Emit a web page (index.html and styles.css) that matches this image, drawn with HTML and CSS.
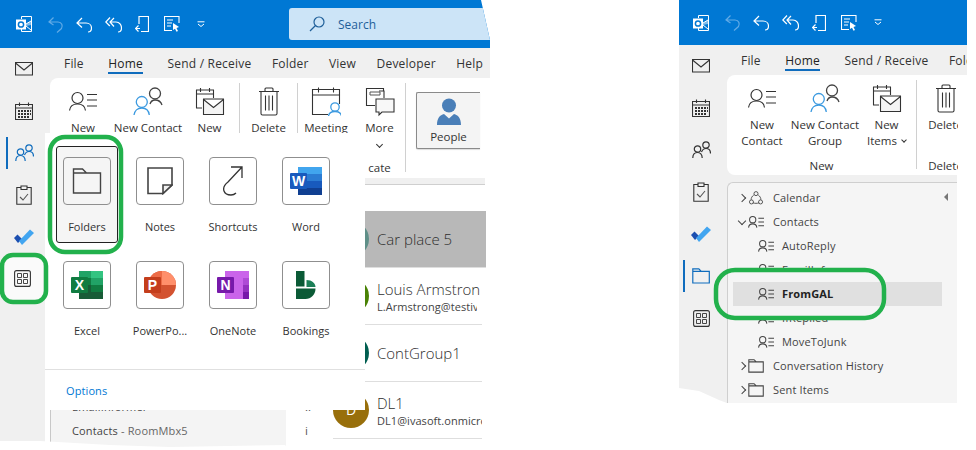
FILE: index.html
```html
<!DOCTYPE html>
<html lang="en">
<head>
<meta charset="utf-8">
<title>Outlook</title>
<link rel="stylesheet" href="styles.css">
</head>
<body>
<svg class="defs" aria-hidden="true">
  <symbol id="i-ol" viewBox="0 0 16 16"><path d="M5.5 3V.5h10v15h-10V13" fill="none" stroke="#fff"/><path d="M0 3.5h10v10H0z" fill="#fff"/><circle cx="5" cy="8.5" r="2.6" fill="none" stroke="#0078d4" stroke-width="1.5"/><path d="M10 8l5-3M10 10l5 4" fill="none" stroke="#fff"/><path d="M10 8l5-3v4l-5 1z" fill="#fff" opacity=".5"/></symbol>
  <symbol id="i-undo" viewBox="0 0 16 17"><path d="M5.5 1.5L1 6l4.5 3M1 6h9c4 0 5 4 3.5 6.5L9 16.5" fill="none" stroke="currentColor" stroke-width="1.2"/></symbol>
  <symbol id="i-reply" viewBox="0 0 16 17"><path d="M6 2L1 7l5 4.5M1 7h9c3.500 0 5.500 2.500 5.500 5 0 2.500-1.500 4-3.500 4" fill="none" stroke="currentColor" stroke-width="1.200"/></symbol>
  <symbol id="i-replyall" viewBox="0 0 17 17"><path d="M5 1.500L.8 6l4 4M9 2L5 6l4 4.500M5 6h6c3.500 0 5.500 3 5.500 6 0 2.500-1.500 4-3.500 4" fill="none" stroke="currentColor" stroke-width="1.200"/></symbol>
  <symbol id="i-move" viewBox="0 0 14 16"><path d="M4 8V.5h9.500v15H6M5 12.500H.8M3.500 9.500l-3 3 3 3" fill="none" stroke="currentColor" stroke-width="1.200"/></symbol>
  <symbol id="i-rules" viewBox="0 0 16 16"><path d="M15 7V.5H.5v14H8M3 4h6M3 7h5M3 10h4" fill="none" stroke="currentColor" stroke-width="1.100"/><path d="M9 7l6 4-2.500 1 1.500 3-1.500.8-1.500-3L9 14z" fill="currentColor"/></symbol>
  <symbol id="i-qat" viewBox="0 0 8 7"><path d="M.5 .8h7M1 3l3 2.500L7 3" fill="none" stroke="currentColor"/></symbol>
  <symbol id="i-search" viewBox="0 0 16 16"><circle cx="10" cy="6" r="5" fill="none" stroke="#1f5f99" stroke-width="1.200"/><path d="M6.500 9.500L1 15" stroke="#1f5f99" stroke-width="1.200"/></symbol>
  <symbol id="i-mail" viewBox="0 0 18 14"><path d="M.5 .5h17v12.500H.5zM.5 1L9 8l8.500-7" fill="none" stroke="currentColor" stroke-width="1.100"/></symbol>
  <symbol id="i-cal" viewBox="0 0 18 18"><path d="M.5 2.500h17v15H.5zM.5 6h17M4.500 .5v3.500M13.500 .5v3.500" fill="none" stroke="currentColor" stroke-width="1.100"/><path d="M3 8h2v2H3zM6 8h2v2H6zM9 8h2v2H9zM12 8h2v2h-2zM15 8h1v2h-1zM3 11h2v2H3zM6 11h2v2H6zM9 11h2v2H9zM12 11h2v2h-2zM15 11h1v2h-1zM3 14h2v2H3zM6 14h2v2H6zM9 14h2v2H9zM12 14h2v2h-2z" fill="currentColor"/></symbol>
  <symbol id="i-people" viewBox="0 0 19 18"><circle cx="5.500" cy="8" r="3.200" fill="none" stroke="currentColor" stroke-width="1.200"/><path d="M.8 17c0-3.500 2-5.500 4.700-5.500s4.700 2 4.700 5.500" fill="none" stroke="currentColor" stroke-width="1.200"/><circle cx="14" cy="4" r="3.200" fill="none" stroke="currentColor" stroke-width="1.200"/><path d="M9.500 11c.8-2 2.500-3.500 4.500-3.500 2.700 0 4.500 2 4.500 5" fill="none" stroke="currentColor" stroke-width="1.200"/></symbol>
  <symbol id="i-task" viewBox="0 0 16 20"><path d="M5 2.500H.8v16.700h14.400V2.500H11M5 4.500V1h6v3.500z" fill="none" stroke="currentColor" stroke-width="1.100"/><path d="M4 12l3 3 5-6" fill="none" stroke="#555" stroke-width="1.100"/></symbol>
  <symbol id="i-todo" viewBox="0 0 20 16"><path d="M0 9l3.500-3.500L8 10l-4 4z" fill="#1c4fb0"/><path d="M5 12L16 .5 20 4 8 16z" fill="#42a5f0"/></symbol>
  <symbol id="i-apps" viewBox="0 0 17 17"><rect x=".6" y=".6" width="15.800" height="15.800" rx="2" fill="none" stroke="currentColor" stroke-width="1.100"/><path d="M3.500 3.500h4v4h-4zM9.500 3.500h4v4h-4zM3.500 9.500h4v4h-4zM9.500 9.500h4v4h-4z" fill="none" stroke="currentColor" stroke-width=".9"/></symbol>
  <symbol id="i-folder" viewBox="0 0 18 16"><path d="M.8 15V.8h6l2.500 2.500h8V15zM.8 3.300h8.500" fill="none" stroke="currentColor" stroke-width="1.200"/></symbol>
  <symbol id="i-newcontact" viewBox="0 0 30 30"><circle cx="9.500" cy="11" r="5.500" fill="none" stroke="#333" stroke-width="1.200"/><path d="M1.500 23.500c.5-4 3.500-6.500 8-6.500s7.500 2.500 8 6.500" fill="none" stroke="#333" stroke-width="1.200"/><path d="M19 7.500h10M19 13h10M19 19h10" stroke="#333" stroke-width="1.200"/></symbol>
  <symbol id="i-newgroup" viewBox="0 0 30 30"><circle cx="22" cy="6.500" r="5.500" fill="none" stroke="#444" stroke-width="1.300"/><path d="M17 17c1-3 3-4 5-4 3.500 0 6 2 7 5" fill="none" stroke="#444" stroke-width="1.300"/><circle cx="8.800" cy="15" r="5.500" fill="none" stroke="#3c9ae0" stroke-width="1.300"/><path d="M1 28c.5-4 3.500-7 7.800-7s7 3 7.500 7" fill="none" stroke="#3c9ae0" stroke-width="1.300"/></symbol>
  <symbol id="i-newitems" viewBox="0 0 30 30"><path d="M7 21H1.500V3h17v8M1.500 7h17M5.500 1v4M14.500 1v4" fill="none" stroke="#333" stroke-width="1.100"/><path d="M8.500 12h20v15.500h-20zM8.500 12.500l10 8 10-8" fill="#f4f4f4" stroke="#333" stroke-width="1.100"/></symbol>
  <symbol id="i-trash" viewBox="0 0 30 30"><path d="M5 4.500h20M7 4.500v22c0 1 .8 1.500 1.500 1.500h13c.8 0 1.500-.5 1.500-1.500v-22M11 4V2c0-.8.5-1 1-1h6c.5 0 1 .2 1 1v2M11.500 8.500v15M15 8.500v15M18.500 8.500v15" fill="none" stroke="#333" stroke-width="1.100"/></symbol>
  <symbol id="i-meeting" viewBox="0 0 30 30"><path d="M17 27.500H1.500V2.500h27V17M1.500 8h27M7.500 .5v5M22.500 .5v5" fill="none" stroke="#333" stroke-width="1.100"/><circle cx="24" cy="20" r="4.200" fill="none" stroke="#3c9ae0" stroke-width="1.300"/><path d="M17.500 29c.5-3 3-4.500 6.500-4.500s6 1.500 6.500 4.500" fill="none" stroke="#3c9ae0" stroke-width="1.300"/></symbol>
  <symbol id="i-more" viewBox="0 0 30 30"><path d="M10 18.500H1.500V1.500h17v2M14 4h5v7" fill="none" stroke="#333" stroke-width="1.100"/><path d="M5 5h10v3H5z" fill="none" stroke="#555"/><path d="M11 12h18v13H17l-3 3v-3h-3z" fill="#f8f8f8" stroke="#333" stroke-width="1.100"/></symbol>
  <symbol id="i-person" viewBox="0 0 24 28"><circle cx="12" cy="7.500" r="7" fill="#4a7fb8"/><path d="M0 27c0-7 3-10 7-11l5 4.500 5-4.500c4 1 7 4 7 11z" fill="#4a7fb8"/></symbol>
  <symbol id="i-contacts" viewBox="0 0 17 14"><circle cx="5" cy="4.500" r="3.300" fill="none" stroke="#444" stroke-width="1.100"/><path d="M.6 13c.3-2.500 2-4 4.400-4s4.100 1.500 4.400 4" fill="none" stroke="#444" stroke-width="1.100"/><path d="M11 3h6M11 7h6M11 11h6" stroke="#444" stroke-width="1.100"/></symbol>
  <symbol id="i-share" viewBox="0 0 16 16"><path d="M5.500 4.500C3.500 6 2.300 8 2.500 10M13.500 10c.2-2-1-4-3-5.500M4.500 13.500c2 .8 5 .8 7 0" fill="none" stroke="#444"/><circle cx="8" cy="3" r="2.300" fill="none" stroke="#444"/><circle cx="2.800" cy="12.500" r="2.300" fill="none" stroke="#444"/><circle cx="13.200" cy="12.500" r="2.300" fill="none" stroke="#444"/></symbol>
  <symbol id="i-fold" viewBox="0 0 30 30"><path d="M1.500 27V3h9l4 4h14v20zM1.500 7h13" fill="none" stroke="#444" stroke-width="1.400"/></symbol>
  <symbol id="i-note" viewBox="0 0 26 28"><path d="M16 26.500H1V1h24v17z" fill="none" stroke="#444" stroke-width="1.600"/><path d="M16 26.500V18h9z" fill="#f0f0f0" stroke="#444" stroke-width="1.600"/></symbol>
  <symbol id="i-short" viewBox="0 0 20 30"><path d="M8 1h11v11M19 1L5 16C1 19 0 22 1 25c1 3 4 4 7 4 2 0 4-1 5-2" fill="none" stroke="#333" stroke-width="1.300"/></symbol>
  <symbol id="i-word" viewBox="0 0 32 28"><path d="M8 0h24v7H8z" fill="#41a5ee"/><path d="M8 7h24v7H8z" fill="#2b7cd3"/><path d="M8 14h24v7H8z" fill="#185abd"/><path d="M8 21h24v7H8z" fill="#103f91"/><rect y="6" width="17" height="16" rx="1" fill="#185abd"/><text x="8.500" y="18.500" class="app-letter">W</text></symbol>
  <symbol id="i-excel" viewBox="0 0 32 28"><path d="M8 0h12v7H8z" fill="#21a366"/><path d="M20 0h12v7H20z" fill="#33c481"/><path d="M8 7h12v7H8z" fill="#107c41"/><path d="M20 7h12v7H20z" fill="#21a366"/><path d="M8 14h12v7H8z" fill="#185c37"/><path d="M20 14h12v7H20z" fill="#107c41"/><path d="M8 21h24v7H8z" fill="#185c37"/><rect y="6" width="17" height="16" rx="1" fill="#107c41"/><text x="8.500" y="18.500" class="app-letter">X</text></symbol>
  <symbol id="i-ppt" viewBox="0 0 32 28"><circle cx="18" cy="14" r="14" fill="#d35230"/><path d="M18 0a14 14 0 0 1 14 14H18z" fill="#ff8f6b"/><path d="M4 14A14 14 0 0 1 18 0v14z" fill="#ed6c47"/><rect y="6" width="17" height="16" rx="1" fill="#c43e1c"/><text x="8.500" y="18.500" class="app-letter">P</text></symbol>
  <symbol id="i-one" viewBox="0 0 32 28"><path d="M8 0h18v28H8z" fill="#ca64ea"/><path d="M26 0h6v7h-6z" fill="#ca64ea"/><path d="M26 7h6v7h-6z" fill="#ae4bd5"/><path d="M26 14h6v7h-6z" fill="#9332bf"/><path d="M26 21h6v7h-6z" fill="#7719aa"/><rect y="6" width="17" height="16" rx="1" fill="#7719aa"/><text x="8.500" y="18.500" class="app-letter">N</text></symbol>
  <symbol id="i-book" viewBox="0 0 20 28"><path d="M0 0h8.500v15.500H0z" fill="#0b5a36"/><path d="M10.500 9c5.500 0 9 3.500 9 7H10.500z" fill="#1b7f57"/><path d="M0 17.500h19.500c0 6-4.500 10.500-10 10.500H0z" fill="#0b5a36"/></symbol>
</svg>

<main class="canvas">
  <section class="win win-left">
    <header class="titlebar">
      <svg class="qi qi-ol"><use href="#i-ol"/></svg>
      <svg class="qi qi-undo"><use href="#i-undo"/></svg>
      <svg class="qi qi-reply"><use href="#i-reply"/></svg>
      <svg class="qi qi-all"><use href="#i-replyall"/></svg>
      <svg class="qi qi-move"><use href="#i-move"/></svg>
      <svg class="qi qi-rules"><use href="#i-rules"/></svg>
      <svg class="qi qi-qat"><use href="#i-qat"/></svg>
      <div class="searchbox"><svg class="search-ic"><use href="#i-search"/></svg><span class="search-tx">Search</span></div>
    </header>
    <div class="body">
      <nav class="side">
        <div class="side-item"><svg class="ic-mail"><use href="#i-mail"/></svg></div>
        <div class="side-item"><svg class="ic-18"><use href="#i-cal"/></svg></div>
        <div class="side-item is-blue"><svg class="ic-people"><use href="#i-people"/></svg></div>
        <div class="side-item"><svg class="ic-task"><use href="#i-task"/></svg></div>
        <div class="side-item"><svg class="ic-todo"><use href="#i-todo"/></svg></div>
        <div class="side-item is-hover"><svg class="ic-apps"><use href="#i-apps"/></svg></div>
      </nav>
      <div class="main">
        <div class="tabs">
          <span class="tab">File</span><span class="tab tab-on">Home</span><span class="tab">Send / Receive</span><span class="tab">Folder</span><span class="tab">View</span><span class="tab">Developer</span><span class="tab">Help</span>
        </div>
        <div class="ribbon-band">
          <div class="ribbon">
            <div class="rb w66"><svg class="rb-ic"><use href="#i-newcontact"/></svg><span>New</span></div>
            <div class="rb w64"><svg class="rb-ic"><use href="#i-newgroup"/></svg><span>New Contact</span></div>
            <div class="rb w59"><svg class="rb-ic"><use href="#i-newitems"/></svg><span>New</span></div>
            <i class="sep"></i>
            <div class="rb w57"><svg class="rb-ic"><use href="#i-trash"/></svg><span>Delete</span></div>
            <i class="sep"></i>
            <div class="rb w56"><svg class="rb-ic"><use href="#i-meeting"/></svg><span>Meeting</span></div>
            <div class="rb w51 rb-more"><svg class="rb-ic"><use href="#i-more"/></svg><span>More</span><b class="chev"></b><em class="grp">cate</em></div>
            <i class="sep"></i>
            <div class="people-btn"><svg class="ic-person"><use href="#i-person"/></svg><span>People</span></div>
          </div>
        </div>
        <div class="gap-band"></div>
        <div class="lower">
          <div class="navpane">
            <div class="nav-row">EmailInformer</div>
            <div class="nav-row">Contacts<span class="muted"> - RoomMbx5</span></div>
          </div>
          <div class="mid"><span>..</span><span>i</span></div>
          <div class="list">
            <div class="person is-sel"><span class="avatar av-car"></span><div class="who"><div class="name">Car place 5</div></div></div>
            <div class="person"><span class="avatar av-louis"></span><div class="who who-clip"><div class="name">Louis Armstron</div><div class="mail">L.Armstrong@testiv</div></div></div>
            <div class="person"><span class="avatar av-cont"></span><div class="who"><div class="name">ContGroup1</div></div></div>
            <div class="person"><span class="avatar av-dl">D</span><div class="who"><div class="name">DL1</div><div class="mail">DL1@ivasoft.onmicro</div></div></div>
          </div>
        </div>
      </div>
    </div>
    <aside class="popup">
      <div class="app-grid">
        <div class="app app-on"><div class="tile"><svg class="a-fold"><use href="#i-fold"/></svg></div><span>Folders</span></div>
        <div class="app"><div class="tile"><svg class="a-note"><use href="#i-note"/></svg></div><span>Notes</span></div>
        <div class="app"><div class="tile"><svg class="a-short"><use href="#i-short"/></svg></div><span>Shortcuts</span></div>
        <div class="app"><div class="tile"><svg class="a-off"><use href="#i-word"/></svg></div><span>Word</span></div>
        <div class="app"><div class="tile"><svg class="a-off"><use href="#i-excel"/></svg></div><span>Excel</span></div>
        <div class="app"><div class="tile"><svg class="a-off"><use href="#i-ppt"/></svg></div><span>PowerPo...</span></div>
        <div class="app"><div class="tile"><svg class="a-off"><use href="#i-one"/></svg></div><span>OneNote</span></div>
        <div class="app"><div class="tile"><svg class="a-book"><use href="#i-book"/></svg></div><span>Bookings</span></div>
      </div>
      <div class="options">Options</div>
    </aside>
  </section>

  <section class="win win-right">
    <header class="titlebar titlebar-r">
      <svg class="qi qi-ol"><use href="#i-ol"/></svg>
      <svg class="qi qi-undo"><use href="#i-undo"/></svg>
      <svg class="qi qi-reply"><use href="#i-reply"/></svg>
      <svg class="qi qi-all"><use href="#i-replyall"/></svg>
      <svg class="qi qi-move"><use href="#i-move"/></svg>
      <svg class="qi qi-rules"><use href="#i-rules"/></svg>
      <svg class="qi qi-qat"><use href="#i-qat"/></svg>
    </header>
    <div class="body">
      <nav class="side side-r">
        <div class="side-item"><svg class="ic-mail"><use href="#i-mail"/></svg></div>
        <div class="side-item"><svg class="ic-18"><use href="#i-cal"/></svg></div>
        <div class="side-item"><svg class="ic-people"><use href="#i-people"/></svg></div>
        <div class="side-item"><svg class="ic-task"><use href="#i-task"/></svg></div>
        <div class="side-item"><svg class="ic-todo"><use href="#i-todo"/></svg></div>
        <div class="side-item is-blue"><svg class="ic-18"><use href="#i-folder"/></svg></div>
        <div class="side-item"><svg class="ic-apps"><use href="#i-apps"/></svg></div>
      </nav>
      <div class="main main-r">
        <div class="tabs tabs-r">
          <span class="tab">File</span><span class="tab tab-on">Home</span><span class="tab">Send / Receive</span><span class="tab">Folder</span>
        </div>
        <div class="ribbon-band">
          <div class="ribbon ribbon-r">
            <div class="rgroup">
              <div class="rg-items">
                <div class="rb w62"><svg class="rb-ic"><use href="#i-newcontact"/></svg><span>New<br>Contact</span></div>
                <div class="rb w64"><svg class="rb-ic"><use href="#i-newgroup"/></svg><span>New Contact<br>Group</span></div>
                <div class="rb w59"><svg class="rb-ic"><use href="#i-newitems"/></svg><span>New<br>Items <b class="chev-in"></b></span></div>
              </div>
              <em class="grp-r">New</em>
            </div>
            <i class="sep"></i>
            <div class="rgroup rgroup-del">
              <div class="rb w57"><svg class="rb-ic"><use href="#i-trash"/></svg><span>Delete</span></div>
              <em class="grp-r">Delete</em>
            </div>
          </div>
        </div>
        <div class="nav-wrap">
          <div class="tree">
            <div class="t-row"><b class="tw tw-r"></b><svg class="t-ic"><use href="#i-share"/></svg><span>Calendar</span><b class="collapse"></b></div>
            <div class="t-row"><b class="tw tw-d"></b><svg class="t-ic"><use href="#i-contacts"/></svg><span>Contacts</span></div>
            <div class="t-row t-child"><svg class="t-ic"><use href="#i-contacts"/></svg><span>AutoReply</span></div>
            <div class="t-row t-child t-cut-b"><svg class="t-ic"><use href="#i-contacts"/></svg><span>EmailInformer</span></div>
            <div class="t-row t-child t-sel"><svg class="t-ic"><use href="#i-contacts"/></svg><span>FromGAL</span></div>
            <div class="t-row t-child t-cut-t"><svg class="t-ic"><use href="#i-contacts"/></svg><span>IfReplied</span></div>
            <div class="t-row t-child"><svg class="t-ic"><use href="#i-contacts"/></svg><span>MoveToJunk</span></div>
            <div class="t-row"><b class="tw tw-r"></b><svg class="t-ic"><use href="#i-folder"/></svg><span>Conversation History</span></div>
            <div class="t-row"><b class="tw tw-r"></b><svg class="t-ic"><use href="#i-folder"/></svg><span>Sent Items</span></div>
          </div>
        </div>
      </div>
    </div>
  </section>

  <svg class="marks" viewBox="0 0 976 450" aria-hidden="true">
    <rect x="50" y="137" width="71" height="115" rx="15"/>
    <rect x="2" y="255" width="44" height="47" rx="11"/>
    <rect x="716" y="270" width="168" height="48" rx="19"/>
  </svg>
</main>
</body>
</html>
```

FILE: styles.css
```css
* { box-sizing: border-box; }
html, body { margin: 0; padding: 0; background: #fff; }
body { font: 11.5px/16px "Open Sans", "Noto Sans", sans-serif; color: #333; overflow: hidden; }
.defs { width: 0; height: 0; position: absolute; }
svg { display: block; flex: none; }
.app-letter { font: 700 14px "Liberation Sans", sans-serif; fill: #fff; text-anchor: middle; }

.canvas { position: relative; width: 976px; height: 450px; display: flex; gap: 189px; overflow: hidden; }
.win { position: relative; display: flex; flex-direction: column; flex: none; }
.win-left { width: 490px; height: 450px; clip-path: polygon(0 0, 481px 0, 490px 40px, 490px 450px, 290px 450px, 285px 445px, 170px 447px, 110px 445px, 40px 441px, 0 441px); }
.win-right { width: 288px; height: 403px; clip-path: polygon(0 0, 288px 0, 288px 403px, 48px 403px, 40px 400px, 20px 391px, 0 388px); }

.titlebar { height: 48px; flex: none; background: #0078d4; display: flex; align-items: center; color: #fff; padding-left: 16px; }
.titlebar-r { height: 45px; padding-left: 14px; }
.qi { color: #fff; }
.qi-ol { width: 16px; height: 16px; }
.qi-undo { width: 16px; height: 17px; margin-left: 16px; color: #62abe6; }
.qi-reply { width: 16px; height: 17px; margin-left: 12px; }
.qi-all { width: 17px; height: 17px; margin-left: 13px; }
.qi-move { width: 14px; height: 16px; margin-left: 13px; }
.qi-rules { width: 16px; height: 16px; margin-left: 15px; }
.qi-qat { width: 8px; height: 7px; margin-left: 17px; }
.searchbox { width: 201px; height: 32px; margin-left: 84px; background: #cce4f7; border-radius: 3px 0 0 3px; display: flex; align-items: center; padding-left: 20px; color: #1f5f99; }
.search-ic { width: 16px; height: 16px; margin-right: 13px; }
.search-tx { font-size: 12px; padding-top: 2px; }

.body { flex: 1; display: flex; min-height: 0; }
.side { width: 45px; flex: none; background: #f0f0f0; display: flex; flex-direction: column; }
.side-r { width: 48px; }
.side-item { height: 42px; margin-left: 6px; padding-right: 5px; border-left: 2px solid transparent; display: flex; align-items: center; justify-content: center; color: #333; }
.side-r .side-item { margin-left: 4px; padding-right: 10px; }
.side-item.is-blue { color: #0f6cbd; border-left-color: #0f6cbd; height: 32px; margin-top: 5px; margin-bottom: 5px; }
.side-item.is-hover { background: #fafafa; margin: -2px 2px 0 4px; padding-right: 2px; border-left: 0; height: 44px; }
.ic-mail { width: 18px; height: 14px; }
.ic-18 { width: 18px; height: 18px; }
.ic-people { width: 19px; height: 18px; }
.ic-task { width: 16px; height: 20px; }
.ic-todo { width: 20px; height: 16px; }
.ic-apps { width: 17px; height: 17px; }

.main { flex: 1; min-width: 0; display: flex; flex-direction: column; background: #fff; }
.tabs { height: 30px; flex: none; display: flex; gap: 20.5px; padding: 8px 0 0 19px; white-space: nowrap; overflow: hidden; background: #f0f0f0; font-size: 12px; }
.tabs-r { padding-left: 14px; }
.tab { height: 18px; letter-spacing: .2px; }
.tab-on { border-bottom: 2px solid #0f6cbd; color: #222; margin: 0 4px; }

.ribbon-band { padding-left: 5px; flex: none; background: #f0f0f0; }
.main-r .ribbon-band { padding-left: 0; }
.ribbon { height: 100px; background: #fff; border-radius: 8px 0 0 8px; display: flex; overflow: hidden; }
.rb { flex: none; display: flex; flex-direction: column; align-items: center; padding-top: 9px; text-align: center; white-space: nowrap; position: relative; }
.rb span { margin-top: 3px; }
.rb-ic { width: 30px; height: 30px; }
.w66 { width: 66px; } .w64 { width: 64px; } .w62 { width: 62px; } .w59 { width: 59px; } .w57 { width: 57px; } .w56 { width: 56px; } .w51 { width: 51px; }
.sep { width: 1px; flex: none; background: #d0d0d0; margin: 5px 0 6px; }
.chev { width: 5px; height: 5px; border: solid #333; border-width: 0 1px 1px 0; transform: rotate(45deg); margin-top: 6px; }
.chev-in { display: inline-block; width: 4px; height: 4px; border: solid #333; border-width: 0 1px 1px 0; transform: rotate(45deg); margin: 0 0 3px 2px; }
.grp { font-style: normal; position: absolute; left: 0; bottom: 2px; width: 100%; }
.people-btn { width: 64px; height: 57px; margin: 14px 0 0 10px; border: 1px solid #8a8a8a; border-right: 0; background: #f4f4f4; border-radius: 2px 0 0 2px; box-shadow: 0 1px 1px #ddd; display: flex; flex-direction: column; align-items: center; padding-top: 5px; flex: none; }
.ic-person { width: 24px; height: 28px; }
.people-btn span { margin-top: 3px; }

.gap-band { height: 7px; flex: none; margin-right: 5px; background: #f0f0f0; border-bottom: 1px solid #cfcfcf; }
.lower { flex: 1; min-height: 0; display: flex; }
.navpane { width: 236px; margin-left: 5px; flex: none; background: #f4f4f4; border-left: 1px solid #c8c8c8; display: flex; flex-direction: column; justify-content: flex-end; padding: 0 0 7px 21px; font-size: 11px; letter-spacing: .15px; }
.nav-row { height: 24px; line-height: 24px; color: #444; }
.muted { color: #666; }
.mid { width: 47px; flex: none; background: #fff; display: flex; flex-direction: column; justify-content: flex-end; padding: 0 0 7px 19px; color: #555; }
.mid span { height: 24px; line-height: 24px; }
.list { flex: 1; min-width: 0; background: #fff; padding-top: 26px; overflow: hidden; }
.person { height: 57px; display: flex; align-items: center; gap: 8px; border-bottom: 1px solid #dedede; margin-right: 8px; white-space: nowrap; }
.person.is-sel { background: #b8b8b8; margin-right: 4px; }
.avatar { width: 36px; height: 36px; flex: none; border-radius: 50%; color: #fff; text-align: center; line-height: 36px; font-size: 14px; }
.av-car { background: #5f8f88; }
.av-louis { background: #498205; }
.av-cont { background: #005e50; }
.av-dl { background: #986f0b; }
.who { min-width: 0; overflow: hidden; }
.who-clip .mail { width: 100px; overflow: hidden; }
.name { font-size: 15px; font-weight: 300; line-height: 20px; color: #2e2e2e; }
.mail { font-size: 11px; letter-spacing: .05px; line-height: 15px; color: #444; }

.popup { position: absolute; left: 45px; top: 133px; width: 320px; height: 277px; background: #fff; display: flex; flex-direction: column; font-size: 11px; }
.app-grid { display: grid; grid-template-columns: repeat(4, 62px); grid-auto-rows: 97px; column-gap: 11px; row-gap: 7px; padding: 13px 0 0 11px; height: 237px; border-bottom: 1px solid #e0e0e0; }
.app { display: flex; flex-direction: column; align-items: center; padding-top: 11px; border-radius: 3px; white-space: nowrap; }
.app span { margin-top: 14px; }
.app-on { background: #f5f5f5; border: 1.5px solid #222; padding-top: 10px; }
.tile { width: 48px; height: 48px; flex: none; border: 1px solid #8f8f8f; border-radius: 4px; background: #fff; display: flex; align-items: center; justify-content: center; }
.app-on .tile { background: #f5f5f5; }
.a-fold { width: 30px; height: 30px; }
.a-note { width: 26px; height: 28px; }
.a-short { width: 20px; height: 30px; }
.a-off { width: 32px; height: 28px; }
.a-book { width: 20px; height: 28px; }
.options { padding: 13px 0 0 21px; color: #0078d4; letter-spacing: .1px; }

.nav-wrap { flex: 1; min-height: 0; width: 230px; background: #f0f0f0; padding-top: 7px; }
.tree { height: 100%; background: #f5f5f5; border: solid #cfcfcf; border-width: 1px 0 0 1px; border-top-left-radius: 6px; padding: 3px 0 0 5px; font-size: 11px; letter-spacing: .15px; }
.t-row { height: 24px; display: flex; align-items: center; padding-left: 4px; position: relative; color: #444; white-space: nowrap; }
.t-row .t-ic { width: 16px; height: 14px; margin-left: 3px; margin-right: 9px; }
.t-child { padding-left: 25px; margin-right: 15px; }
.t-child .t-ic { margin-left: 0; margin-right: 8px; }
.t-sel { background: #e0e0e0; font-weight: 700; color: #222; }
.t-cut-b .t-ic, .t-cut-b span { clip-path: inset(0 0 45% 0); }
.t-cut-t .t-ic, .t-cut-t span { clip-path: inset(45% 0 0 0); }
.tw { width: 6px; height: 6px; border: solid #444; flex: none; }
.tw-r { border-width: 1px 1px 0 0; transform: rotate(45deg); margin-left: 2px; }
.tw-d { border-width: 0 1px 1px 0; transform: rotate(45deg); margin: -3px 0 0 2px; }
.collapse { position: absolute; right: 9px; top: 7px; width: 0; height: 0; border: 4px solid transparent; border-right: 4px solid #777; border-left: 0; }

.rgroup { flex: none; display: flex; flex-direction: column; }
.rg-items { display: flex; height: 83px; padding-left: 4px; }
.grp-r { font-style: normal; text-align: center; line-height: 16px; }
.rgroup-del { width: 41px; overflow: hidden; }
.rgroup-del .rb { height: 83px; }
.rgroup-del .grp-r { width: 57px; }

.marks { position: absolute; left: 0; top: 0; width: 976px; height: 450px; pointer-events: none; }
.marks rect { fill: none; stroke: #22b14c; stroke-width: 4.5; }
```
